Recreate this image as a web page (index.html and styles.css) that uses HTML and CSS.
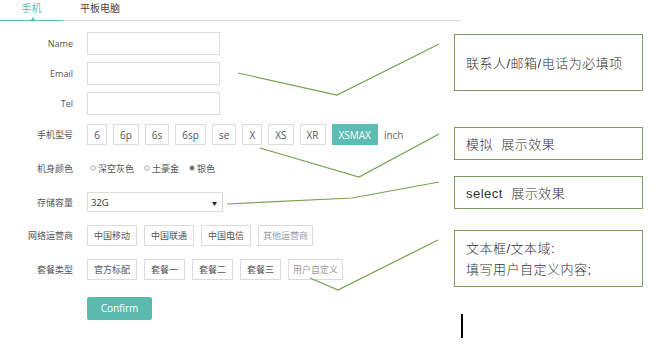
FILE: index.html
```html
<!DOCTYPE html>
<html lang="zh-CN">
<head>
<meta charset="utf-8">
<title>表单原型</title>
<link rel="stylesheet" href="styles.css">
</head>
<body>
<div class="page">
  <div class="tabs">
    <div class="tab active">手机</div>
    <div class="tab">平板电脑</div>
  </div>

  <form class="form">
    <label class="lbl">Name</label>
    <div class="field"><input class="txt" type="text"></div>

    <label class="lbl">Email</label>
    <div class="field"><input class="txt" type="text"></div>

    <label class="lbl">Tel</label>
    <div class="field"><input class="txt" type="text"></div>

    <label class="lbl">手机型号</label>
    <div class="field opts models">
      <span class="opt">6</span>
      <span class="opt">6p</span>
      <span class="opt">6s</span>
      <span class="opt">6sp</span>
      <span class="opt">se</span>
      <span class="opt">X</span>
      <span class="opt">XS</span>
      <span class="opt">XR</span>
      <span class="opt on">XSMAX</span>
      <span class="unit">inch</span>
    </div>

    <label class="lbl">机身颜色</label>
    <div class="field radios">
      <span class="radio-item"><i class="radio"></i>深空灰色</span>
      <span class="radio-item"><i class="radio"></i>土豪金</span>
      <span class="radio-item"><i class="radio checked"></i>银色</span>
    </div>

    <label class="lbl">存储容量</label>
    <div class="field">
      <div class="select"><span>32G</span><span class="arrow">▼</span></div>
    </div>

    <label class="lbl">网络运营商</label>
    <div class="field opts">
      <span class="opt">中国移动</span>
      <span class="opt">中国联通</span>
      <span class="opt">中国电信</span>
      <span class="opt muted">其他运营商</span>
    </div>

    <label class="lbl">套餐类型</label>
    <div class="field opts pkgs">
      <span class="opt">官方标配</span>
      <span class="opt">套餐一</span>
      <span class="opt">套餐二</span>
      <span class="opt">套餐三</span>
      <span class="opt muted">用户自定义</span>
    </div>

    <span class="lbl"></span>
    <div class="field"><button class="confirm" type="button">Confirm</button></div>
  </form>

  <svg class="leaders" width="665" height="353" viewBox="0 0 665 353">
    <polyline points="238,73 337,95 439,44"/>
    <polyline points="260,148 359,177 439,134"/>
    <polyline points="227,204 352,198 439,182"/>
    <polyline points="310,278 338,290 438,240"/>
  </svg>

  <div class="note n1">联系人/邮箱/电话为必填项</div>
  <div class="note n2">模拟  展示效果</div>
  <div class="note n3">select  展示效果</div>
  <div class="note n4">文本框/文本域:<br>填写用户自定义内容;</div>

  <span class="cursor"></span>
</div>
</body>
</html>
```

FILE: styles.css
```css
* { box-sizing: border-box; }

html, body {
  margin: 0;
  padding: 0;
  background: #fff;
}

body {
  font-family: "Open Sans", "Noto Sans CJK SC", sans-serif;
  color: #555;
  width: 665px;
  height: 353px;
  overflow: hidden;
}

.page {
  position: relative;
  width: 665px;
  height: 353px;
}

/* tabs */
.tabs {
  display: flex;
  width: 460px;
  height: 21px;
  border-bottom: 1px solid #d4d4d4;
}

.tab {
  font-size: 10px;
  line-height: 16px;
  color: #444;
}

.tab.active {
  position: relative;
  width: 63px;
  text-align: center;
  color: #5bbdb4;
  border-bottom: 1px solid #5bbdb4;
  margin-bottom: -1px;
}

.tab.active::after {
  content: "";
  position: absolute;
  left: 31px;
  bottom: 0;
  border-left: 2px solid transparent;
  border-right: 2px solid transparent;
  border-bottom: 3px solid #5bbdb4;
}

.tab + .tab {
  padding-left: 17px;
}

/* form grid */
.form {
  display: grid;
  grid-template-columns: 73px 380px;
  grid-template-rows: 30px 30px 30px 33px 34px 34px 33px 34px 44px;
  column-gap: 14px;
  align-items: center;
  padding-top: 7px;
  margin: 0;
}

.lbl {
  font-size: 9px;
  text-align: right;
  color: #555;
}

.field {
  display: flex;
  align-items: center;
}

.txt {
  width: 133px;
  height: 23px;
  border: 1px solid #dcdcdc;
  padding: 0 4px;
  margin: 0;
  background: #fff;
  font: inherit;
}

.opts {
  gap: 7px;
}

.opt {
  display: inline-flex;
  align-items: center;
  justify-content: center;
  min-width: 20px;
  height: 21px;
  padding: 0 6px;
  border: 1px solid #dcdcdc;
  font-size: 9px;
  color: #555;
  background: #fff;
}

.models {
  gap: 6px;
}

.models .opt {
  font-size: 10px;
  min-width: 20px;
}

.opt.on {
  background: #5bbdb4;
  border-color: #5bbdb4;
  color: #fff;
}

.opt.muted {
  color: #9a9a9a;
  padding: 0 4px;
}

.unit {
  font-size: 10px;
  color: #666;
}

/* radios */
.radios {
  gap: 7px;
  font-size: 9px;
  color: #555;
}

.radio-item {
  display: inline-flex;
  align-items: center;
}

.radio {
  display: inline-block;
  width: 6px;
  height: 6px;
  border: 1px solid #c4c4c4;
  border-radius: 50%;
  background: #ececec;
  margin: 0 2px 0 3px;
}

.radio.checked {
  background: radial-gradient(circle, #666 0 1.6px, #ececec 2px);
  border-color: #bbb;
}

/* select */
.select {
  display: flex;
  align-items: center;
  justify-content: space-between;
  width: 136px;
  height: 20px;
  border: 1px solid #dcdcdc;
  padding: 0 5px 0 3px;
  font-size: 9.5px;
  color: #333;
}

.arrow {
  font-size: 5px;
  color: #222;
}

/* confirm */
.confirm {
  width: 65px;
  height: 23px;
  border: 0;
  border-radius: 2px;
  background: #5cbab1;
  color: #fff;
  font-family: "Open Sans", sans-serif;
  font-size: 10px;
  padding: 0;
}

/* annotation canvas */
.leaders {
  position: absolute;
  left: 0;
  top: 0;
  pointer-events: none;
}

.leaders polyline {
  fill: none;
  stroke: #77a24f;
  stroke-width: 1.2;
}

.note {
  position: absolute;
  left: 454px;
  width: 189px;
  border: 1px solid #7f9b5e;
  padding-left: 11px;
  display: flex;
  align-items: center;
  font-family: "Liberation Sans", "Noto Sans CJK SC", sans-serif;
  font-weight: 300;
  font-size: 13px;
  letter-spacing: 0.5px;
  color: #333;
  white-space: pre;
  background: #fff;
}

.n1 { top: 34px; height: 57px; }
.n2 { top: 127px; height: 33px; }
.n3 { top: 176px; height: 33px; }
.n4 { top: 230px; height: 57px; line-height: 21px; }

.cursor {
  position: absolute;
  left: 461px;
  top: 314px;
  width: 2px;
  height: 24px;
  background: #000;
}
```
